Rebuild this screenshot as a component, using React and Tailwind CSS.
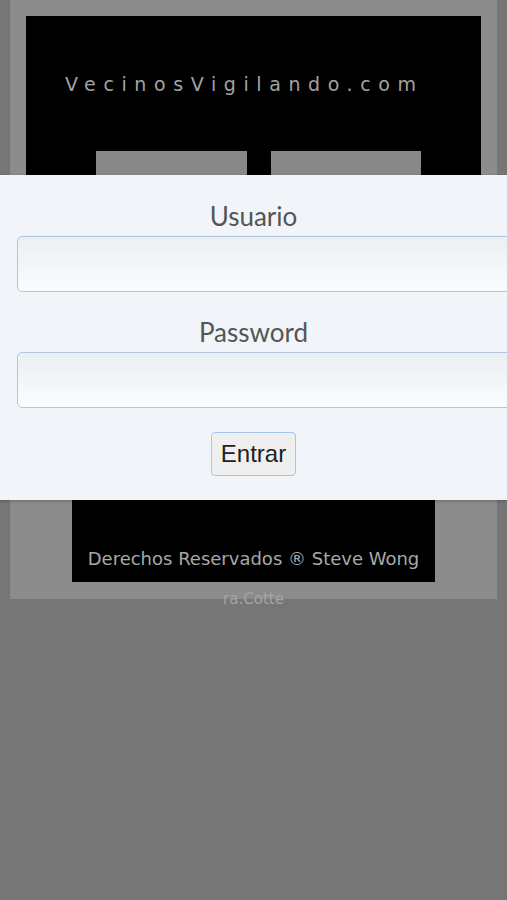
import React from 'react';

const App = () => {
  return (
    <div className="relative min-h-[900px] w-[507px] overflow-hidden bg-[#767676]">
      {/* Page behind the login overlay */}
      <div className="mx-[10px] flex h-[599px] flex-col bg-[#8c8c8c] pt-[16px]">
        <div className="mx-[16px] h-[200px] bg-black">
          <p className="pt-[56px] pl-[39px] text-[19px] leading-[24px] tracking-[7.6px] text-[#a3a3a3] [font-family:'DejaVu_Sans',sans-serif]">
            VecinosVigilando.com
          </p>
          <div className="mt-[55px] flex gap-[24px] pl-[70px]">
            <div className="h-[60px] w-[151px] bg-[#888]" />
            <div className="h-[60px] w-[150px] bg-[#888]" />
          </div>
        </div>

        <div className="mt-auto mb-[17px] ml-[62px] flex h-[90px] w-[363px] items-end justify-center border-t-[3px] border-[#8a0000] bg-black pb-[11px]">
          <p className="text-[18px] leading-[24px] text-[#a8a8a8] [font-family:'DejaVu_Sans',sans-serif]">
            Derechos Reservados ® Steve Wong
          </p>
        </div>
      </div>
      <p className="-mt-[5px] text-center text-[15px] leading-[10px] text-[#a4a4a4] [font-family:'DejaVu_Sans',sans-serif]">
        ra.Cotte
      </p>

      {/* Login overlay */}
      <div className="absolute top-[175px] left-0 h-[325px] w-[507px] bg-[#f1f5f9] shadow-[0_1px_3px_rgba(0,0,0,0.25)]">
        <div className="flex flex-col items-center pt-[25px]">
          <label className="text-[26px] leading-[32px] text-[#555] [font-family:'Lato',sans-serif]">Usuario</label>
          <input
            type="text"
            className="mt-[4px] ml-[17px] h-[56px] w-[520px] self-start rounded-[5px] border border-[#b3c4de] bg-gradient-to-b from-[#eaeff4] to-[#fbfcfd] outline-none"
          />
          <label className="mt-[24px] text-[26px] leading-[32px] text-[#555] [font-family:'Lato',sans-serif]">Password</label>
          <input
            type="password"
            className="mt-[4px] ml-[17px] h-[56px] w-[520px] self-start rounded-[5px] border border-[#b3c4de] bg-gradient-to-b from-[#eaeff4] to-[#fbfcfd] outline-none"
          />
          <button className="mt-[24px] h-[44px] w-[85px] rounded-[4px] border border-[#a6c6ec] bg-[#efefef] text-[24px] leading-[30px] text-[#222] [font-family:'Liberation_Sans',sans-serif]">
            Entrar
          </button>
        </div>
      </div>
    </div>
  );
};

export default App;
